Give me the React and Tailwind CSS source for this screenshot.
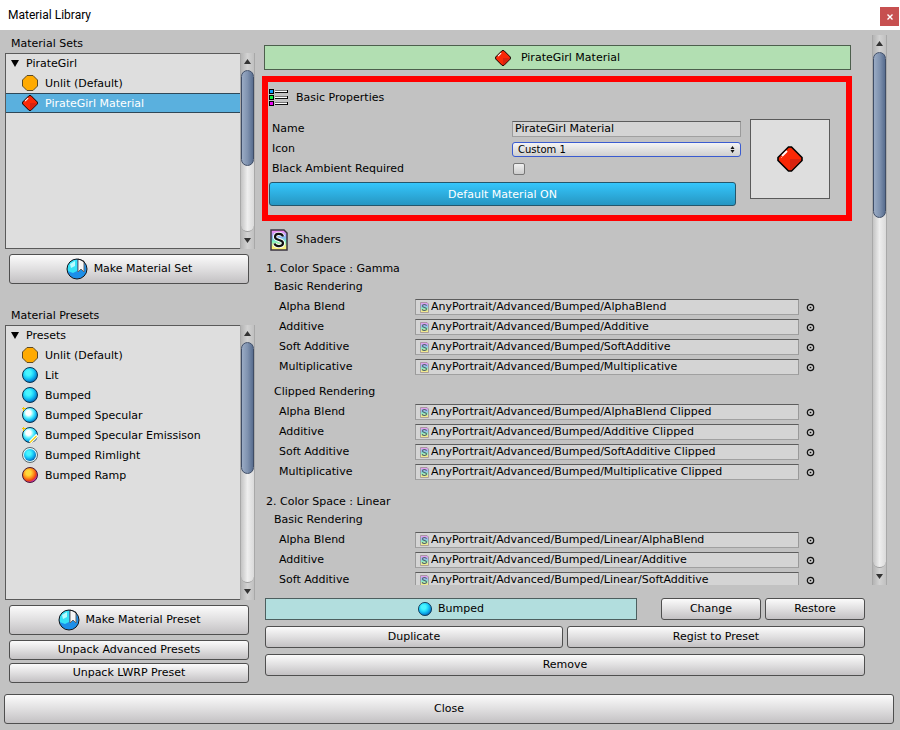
import React, { useId, useState } from "react";

const BUTTON =
  "flex items-center justify-center rounded-[3px] border border-[#4f4f4f] bg-linear-to-b from-[#fbfbfb] via-[#e0dfe0] to-[#c3c1c3]";

const FIELD =
  "h-4 border border-t-[#5c5c5c] border-x-[#9a9a9a] border-b-[#a0a0a0] bg-[#d4d4d4]";

function Gem({ className }) {
  return (
    <svg viewBox="0 0 26 26" className={className} aria-hidden="true">
      <path d="M11.5 1H14.5L25 11.5V14.5L14.5 25H11.5L1 14.5V11.5Z" fill="#fa2806" stroke="#000" strokeWidth="1.6" />
      <path d="M13 13H24V14.500L14.500 24H13Z" fill="#d8220f" />
      <path d="M5 10L10 5" stroke="#fff" strokeWidth="1.8" />
      <path d="M4 12L5 11" stroke="#ff9a80" strokeWidth="1" />
    </svg>
  );
}

const BALLS = {
  blue: ["#48f4ff", "#1fd6fa", "#0a9be2", "#0560a8"],
  shiny: ["#ffffff", "#5ff2ff", "#12b8f2", "#0560a8"],
  ramp: ["#ffd83a", "#ff9a1c", "#ee4413", "#b02be8"],
};

function Ball({ kind, className = "size-4" }) {
  const id = useId();
  if (kind === "unlit") {
    return (
      <svg viewBox="0 0 16 16" className={className} aria-hidden="true">
        <path d="M5 .5H11L15.500 5V11L11 15.500H5L.5 11V5Z" fill="#ffaa00" stroke="#5c4a26" />
      </svg>
    );
  }
  const stars = kind === "specular" || kind === "emission";
  const rim = kind === "rim";
  const colors = kind === "ramp" ? BALLS.ramp : stars ? BALLS.shiny : BALLS.blue;
  return (
    <svg viewBox="0 0 16 16" className={className} aria-hidden="true">
      <defs>
        <radialGradient id={id} cx="0.4" cy="0.36" r="0.66">
          <stop offset="0.25" stopColor={colors[0]} />
          <stop offset="0.5" stopColor={colors[1]} />
          <stop offset="0.78" stopColor={colors[2]} />
          <stop offset="1" stopColor={colors[3]} />
        </radialGradient>
      </defs>
      <circle
        cx="8"
        cy="8"
        r="7.500"
        fill={rim ? "#d9f6fb" : `url(#${id})`}
        stroke={rim ? "#5c6468" : kind === "ramp" ? "#4a1a33" : "#0b3350"}
        strokeWidth="1"
      />
      {rim && <circle cx="8" cy="8" r="6" fill={`url(#${id})`} />}
      {stars && (
        <>
          <path d="M0 0H5L0 5Z" fill="#dedede" />
          <path d="M1.500 0V4M0 1.500H4" stroke="#f5c800" />
        </>
      )}
      {kind === "emission" && (
        <>
          <path d="M8 15.500L15.500 8" stroke="#fff" strokeWidth="3.500" />
          <path d="M8 15.500L14.500 9" stroke="#f2d21c" strokeWidth="1.500" />
        </>
      )}
    </svg>
  );
}

function MakeIcon() {
  return (
    <svg viewBox="0 0 22 22" className="size-[22px]" aria-hidden="true">
      <circle cx="11" cy="11" r="10" fill="#1d8fe8" />
      <path d="M1.500 13A9.500 9.500 0 0 1 11 1.500V13L7 15Z" fill="#35e2f6" />
      <path d="M4 6L9 3V8L5 10Z" fill="#b8fbff" />
      <path d="M12 1L18 3V14L15 11L12 14Z" fill="#f6f6f6" stroke="#666" strokeWidth="1" />
      <circle cx="11" cy="11" r="10" fill="none" stroke="#10141a" strokeWidth="1" />
    </svg>
  );
}

function ListIcon() {
  return (
    <svg viewBox="0 0 20 18" className="h-[18px] w-5" shapeRendering="crispEdges" aria-hidden="true">
      {["#0a9cff", "#08ee3c", "#e808f0"].map((fill, i) => (
        <g key={fill} transform={`translate(0 ${i * 6})`}>
          <rect x="0.5" y="0.5" width="4" height="4" fill={fill} stroke="#000" />
          <rect x="6" y="1" width="13" height="1" fill="#777" />
          <rect x="6" y="2" width="12" height="1" fill="#fff" />
          <rect x="6" y="3" width="13" height="1" fill="#111" />
          <rect x="18" y="1" width="1" height="3" fill="#000" />
        </g>
      ))}
    </svg>
  );
}

function ShaderIcon({ small }) {
  const id = useId();
  return (
    <svg
      viewBox="0 0 18 22"
      className={small ? "h-[11px] w-[9px] shrink-0 opacity-80" : "h-[22px] w-[18px]"}
      aria-hidden="true"
    >
      <defs>
        <linearGradient id={id} x1="0" y1="0" x2="0" y2="1">
          <stop offset="0.05" stopColor="#f48cf4" />
          <stop offset="0.35" stopColor="#86b4fa" />
          <stop offset="0.58" stopColor="#7df0c0" />
          <stop offset="0.85" stopColor="#fbf07c" />
        </linearGradient>
      </defs>
      <path
        d="M1 1H14L17 4V21H1Z"
        fill={`url(#${id})`}
        stroke={small ? "#8a7a80" : "#3b3440"}
        strokeWidth="1.500"
      />
      {!small && (
        <path
          d="M13 7.500C12 4 5 4 5 8C5 12 13 10 13 14C13 18 5.500 18 4.500 14.500"
          fill="none"
          stroke="#fff"
          strokeWidth="4"
        />
      )}
      <path
        d="M13 7.500C12 4 5 4 5 8C5 12 13 10 13 14C13 18 5.500 18 4.500 14.500"
        fill="none"
        stroke={small ? "#2c4a50" : "#111"}
        strokeWidth="2.200"
      />
    </svg>
  );
}

function Triangle({ up }) {
  return (
    <svg viewBox="0 0 7 5" className="h-[5px] w-[7px]" aria-hidden="true">
      <path d={up ? "M3.500 0L7 5H0Z" : "M0 0H7L3.500 5Z"} fill="#333" />
    </svg>
  );
}

function ScrollBar({ thumb }) {
  return (
    <div className="flex w-[15px] shrink-0 flex-col border-x border-[#a8a8a8] bg-linear-to-r from-[#b4b4b4] via-[#d2d2d2] to-[#c0c0c0]">
      <button type="button" aria-label="Scroll up" className="flex h-[17px] shrink-0 items-center justify-center">
        <Triangle up />
      </button>
      <div className="flex-1 rounded-full border-b border-[#999] bg-linear-to-r from-[#c4c4c4] via-[#eeeeee] to-[#dadada]">
        <div
          className={`${thumb} rounded-full border border-[#3f4d66] bg-linear-to-r from-[#9aabc4] via-[#8093b0] to-[#586d8f]`}
        />
      </div>
      <button type="button" aria-label="Scroll down" className="flex h-[17px] shrink-0 items-center justify-center">
        <Triangle />
      </button>
    </div>
  );
}

function TreeList({ title, items, selected, onSelect, thumb, className }) {
  return (
    <div className={`flex ${className}`}>
      <div className="min-w-0 flex-1 overflow-hidden border border-r-0 border-[#5a5a5a] bg-[#dedede]">
        <button type="button" className="flex h-[19px] w-full items-center gap-[7px] pl-[5px]">
          <svg viewBox="0 0 8 7" className="h-[7px] w-2" aria-hidden="true">
            <path d="M0 0H8L4 7Z" fill="#000" />
          </svg>
          {title}
        </button>
        <ul>
          {items.map(([label, kind]) => (
            <li key={label}>
              <button
                type="button"
                onClick={() => onSelect(label)}
                className={`flex h-5 w-full items-center gap-[7px] border-y pl-4 ${
                  selected === label ? "border-[#2f4858] bg-[#5ab0de] text-white" : "border-transparent"
                }`}
              >
                {kind === "gem" ? <Gem className="size-4" /> : <Ball kind={kind} />}
                <span className="pt-px">{label}</span>
              </button>
            </li>
          ))}
        </ul>
      </div>
      <ScrollBar thumb={thumb} />
    </div>
  );
}

function ShaderField({ label, path }) {
  const id = useId();
  return (
    <div className="flex h-5 items-center pl-[15px]">
      <label htmlFor={id} className="w-[136px]">
        {label}
      </label>
      <div className={`flex flex-1 items-center gap-[2px] pl-1 ${FIELD}`}>
        <ShaderIcon small />
        <input id={id} readOnly value={path} className="min-w-0 flex-1 bg-transparent leading-[14px] outline-none" />
      </div>
      <button type="button" aria-label={`Select ${label}`} className="ml-[7px] mr-[37px]">
        <svg viewBox="0 0 9 9" className="size-[9px]" aria-hidden="true">
          <circle cx="4.500" cy="4.500" r="3.200" fill="none" stroke="#111" strokeWidth="1.200" />
          <circle cx="4.500" cy="4.500" r="0.800" fill="#111" />
        </svg>
      </button>
    </div>
  );
}

function ShaderGroup({ title, prefix, rows, suffix = "" }) {
  return (
    <section>
      <h4 className="flex h-5 items-center pl-[10px]">{title}</h4>
      {rows.map(([label, name]) => (
        <ShaderField key={label} label={label} path={`AnyPortrait/Advanced/Bumped/${prefix}${name}${suffix}`} />
      ))}
    </section>
  );
}

const SHADERS = [
  ["Alpha Blend", "AlphaBlend"],
  ["Additive", "Additive"],
  ["Soft Additive", "SoftAdditive"],
  ["Multiplicative", "Multiplicative"],
];

const SETS = [
  ["Unlit (Default)", "unlit"],
  ["PirateGirl Material", "gem"],
];

const PRESETS = [
  ["Unlit (Default)", "unlit"],
  ["Lit", "blue"],
  ["Bumped", "blue"],
  ["Bumped Specular", "specular"],
  ["Bumped Specular Emissison", "emission"],
  ["Bumped Rimlight", "rim"],
  ["Bumped Ramp", "ramp"],
];

function BasicProperties() {
  const [name, setName] = useState("PirateGirl Material");
  return (
    <section className="h-[145px] border-6 border-[#ff0000] pl-px">
      <h3 className="flex h-8 items-center gap-[7px]">
        <ListIcon />
        Basic Properties
      </h3>
      <div className="flex">
        <div className="flex-1 pt-[5px]">
          <div className="flex h-5 items-center pl-[3px]">
            <label htmlFor="name" className="w-60">Name</label>
            <input
              id="name"
              value={name}
              onChange={(e) => setName(e.target.value)}
              className={`min-w-0 flex-1 px-[2px] outline-none ${FIELD}`}
            />
          </div>
          <div className="flex h-5 items-center pl-[3px]">
            <label htmlFor="icon" className="w-60">Icon</label>
            <div className="relative flex flex-1">
              <select
                id="icon"
                className="h-[15px] w-full appearance-none rounded-[3px] border border-[#3a5bd0] bg-linear-to-b from-[#f4f4f4] to-[#cfcfcf] px-[5px] text-[10px] leading-[13px] outline-none"
              >
                <option>Custom 1</option>
              </select>
              <svg viewBox="0 0 5 7" className="pointer-events-none absolute right-[6px] top-1 h-[7px] w-[5px]" aria-hidden="true">
                <path d="M2.500 0L4.500 3H.5ZM2.500 7L4.500 4H.5Z" fill="#111" />
              </svg>
            </div>
          </div>
          <div className="flex h-5 items-center pl-[3px]">
            <label htmlFor="ambient" className="w-[241px]">Black Ambient Required</label>
            <input
              id="ambient"
              type="checkbox"
              className="size-3 appearance-none rounded-[2px] border border-[#777] bg-linear-to-b from-[#f0f0f0] to-[#cccccc]"
            />
          </div>
          <button
            type="button"
            className="mt-[3px] flex h-6 w-[calc(100%-5px)] items-center justify-center rounded-[3px] border border-[#25566b] bg-linear-to-b from-[#35c6fc] to-[#2696c2] pt-[2px] text-white"
          >
            Default Material ON
          </button>
        </div>
        <div className="ml-[9px] mr-4 mt-[5px] flex size-20 items-center justify-center border border-[#5a5a5a] bg-[#dedede]">
          <Gem className="size-[26px]" />
        </div>
      </div>
    </section>
  );
}

export default function App() {
  const [set, setSet] = useState("PirateGirl Material");
  const [preset, setPreset] = useState("");
  return (
    <div className="flex h-screen flex-col bg-[#c2c2c2] font-['DejaVu_Sans',Verdana,sans-serif] text-[11px] leading-4 text-black">
      <header className="flex h-[30px] shrink-0 items-center justify-between bg-white pl-2 pr-px font-['Roboto',sans-serif] text-[12px]">
        <h1>Material Library</h1>
        <button
          type="button"
          aria-label="Close window"
          className="mt-[3px] flex size-[19px] items-center justify-center bg-[#c75050]"
        >
          <svg viewBox="0 0 6 6" className="size-[6px]" aria-hidden="true">
            <path d="M0.500 0.500L5.500 5.500M5.500 0.500L0.500 5.500" stroke="#fff" strokeWidth="1.400" />
          </svg>
        </button>
      </header>

      <main className="flex min-h-0 flex-1 gap-[7px] pr-[13px]">
        <aside className="flex w-[255px] shrink-0 flex-col pl-[5px] pt-[3px]">
          <h2 className="flex h-5 items-center pl-[6px] pt-px">Material Sets</h2>
          <TreeList
            title="PirateGirl"
            items={SETS}
            selected={set}
            onSelect={setSet}
            thumb="h-[96px]"
            className="h-[196px] shrink-0"
          />
          <button type="button" className={`ml-1 mr-[6px] mt-[5px] h-[30px] shrink-0 gap-[6px] ${BUTTON}`}>
            <MakeIcon />
            Make Material Set
          </button>
          <h2 className="mt-[21px] flex h-5 shrink-0 items-center pl-[6px] pt-px">Material Presets</h2>
          <TreeList
            title="Presets"
            items={PRESETS}
            selected={preset}
            onSelect={setPreset}
            thumb="h-[132px]"
            className="min-h-0 flex-1"
          />
          <div className="ml-1 mr-[6px] mt-[5px] flex shrink-0 flex-col">
            <button type="button" className={`h-[30px] gap-[6px] ${BUTTON}`}>
              <MakeIcon />
              Make Material Preset
            </button>
            <button type="button" className={`mt-[5px] h-5 ${BUTTON}`}>Unpack Advanced Presets</button>
            <button type="button" className={`mt-[3px] h-5 ${BUTTON}`}>Unpack LWRP Preset</button>
          </div>
        </aside>

        <div className="flex min-w-0 flex-1 flex-col pt-[5px]">
          <div className="flex min-h-0 flex-1 gap-5">
            <div className="min-w-0 flex-1 overflow-hidden pt-[10px]">
              <h2 className="mb-[6px] ml-[2px] mr-px flex h-[25px] items-center justify-center gap-[10px] border border-[#4d5f4d] bg-[#b2dfb2]">
                <Gem className="size-4" />
                PirateGirl Material
              </h2>
              <BasicProperties />
              <h3 className="mt-2 flex h-[22px] items-center gap-2 pl-2">
                <ShaderIcon />
                Shaders
              </h3>
              <div className="mt-[10px] flex flex-col gap-3 pl-[2px]">
                <section>
                  <h3 className="flex h-4 items-center pl-[2px]">1. Color Space : Gamma</h3>
                  <div className="flex flex-col gap-[5px]">
                    <ShaderGroup title="Basic Rendering" prefix="" rows={SHADERS} />
                    <ShaderGroup title="Clipped Rendering" prefix="" rows={SHADERS} suffix=" Clipped" />
                  </div>
                </section>
                <section>
                  <h3 className="flex h-4 items-center pl-[2px]">2. Color Space : Linear</h3>
                  <ShaderGroup title="Basic Rendering" prefix="Linear/" rows={SHADERS.slice(0, 3)} />
                </section>
              </div>
            </div>
            <ScrollBar thumb="h-[166px]" />
          </div>

          <div className="mt-[13px] mb-[7px] ml-[3px] mr-[22px] flex shrink-0 flex-col gap-[6px]">
            <div className="flex h-[22px] gap-1">
              <div className="mr-5 flex flex-1 items-center justify-center gap-[6px] border border-[#4d5f5f] bg-[#b2dede]">
                <Ball kind="blue" className="size-[14px]" />
                Bumped
              </div>
              <button type="button" className={`w-[100px] ${BUTTON}`}>Change</button>
              <button type="button" className={`w-[100px] ${BUTTON}`}>Restore</button>
            </div>
            <div className="flex h-[22px] gap-1">
              <button type="button" className={`flex-1 ${BUTTON}`}>Duplicate</button>
              <button type="button" className={`flex-1 ${BUTTON}`}>Regist to Preset</button>
            </div>
            <button type="button" className={`h-[22px] ${BUTTON}`}>Remove</button>
          </div>
        </div>
      </main>

      <footer className="flex shrink-0 pb-[6px] pl-1 pr-[6px] pt-[11px]">
        <button type="button" className={`h-[30px] flex-1 ${BUTTON}`}>Close</button>
      </footer>
    </div>
  );
}
